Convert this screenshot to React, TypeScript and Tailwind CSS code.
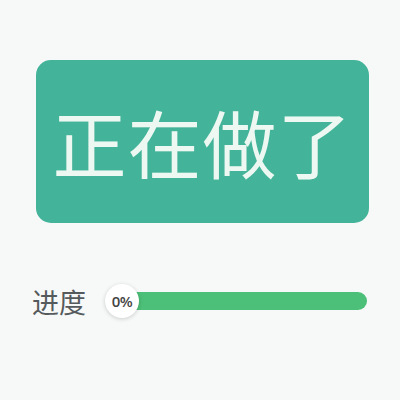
export default function App() {
  return (
    <div className="w-[400px] h-[400px] bg-[#f7f8f8] flex flex-col pt-[60px]" style={{ fontFamily: '"Noto Sans", "Noto Sans CJK SC", sans-serif' }}>
      <div className="ml-[36px] w-[333px] h-[163px] rounded-[15px] bg-[#43b399] flex items-center justify-center">
        <span className="text-[74px] leading-none text-[#eef8f2] tracking-[1px] -mt-[2px]" style={{ fontFamily: '"Noto Sans CJK SC", sans-serif' }}>
          正在做了
        </span>
      </div>
      <div className="w-[400px] mt-[61px] flex items-center pl-[32px] pr-[33px]">
        <span className="text-[27px] leading-none text-[#555a5c] mr-[19px]" style={{ fontFamily: '"Noto Sans CJK SC", sans-serif' }}>
          进度
        </span>
        <div className="relative flex-1 h-[34px] flex items-center">
          <div className="ml-[17px] flex-1 h-[18px] rounded-full bg-[#4cbf78]" />
          <div className="absolute left-0 top-0 w-[34px] h-[34px] rounded-full bg-white shadow-[0_1px_4px_rgba(0,0,0,0.18)] flex items-center justify-center">
            <span className="text-[15px] font-semibold text-[#444] tracking-[-0.5px]" style={{ fontFamily: '"Open Sans", sans-serif' }}>0%</span>
          </div>
        </div>
      </div>
    </div>
  );
}
